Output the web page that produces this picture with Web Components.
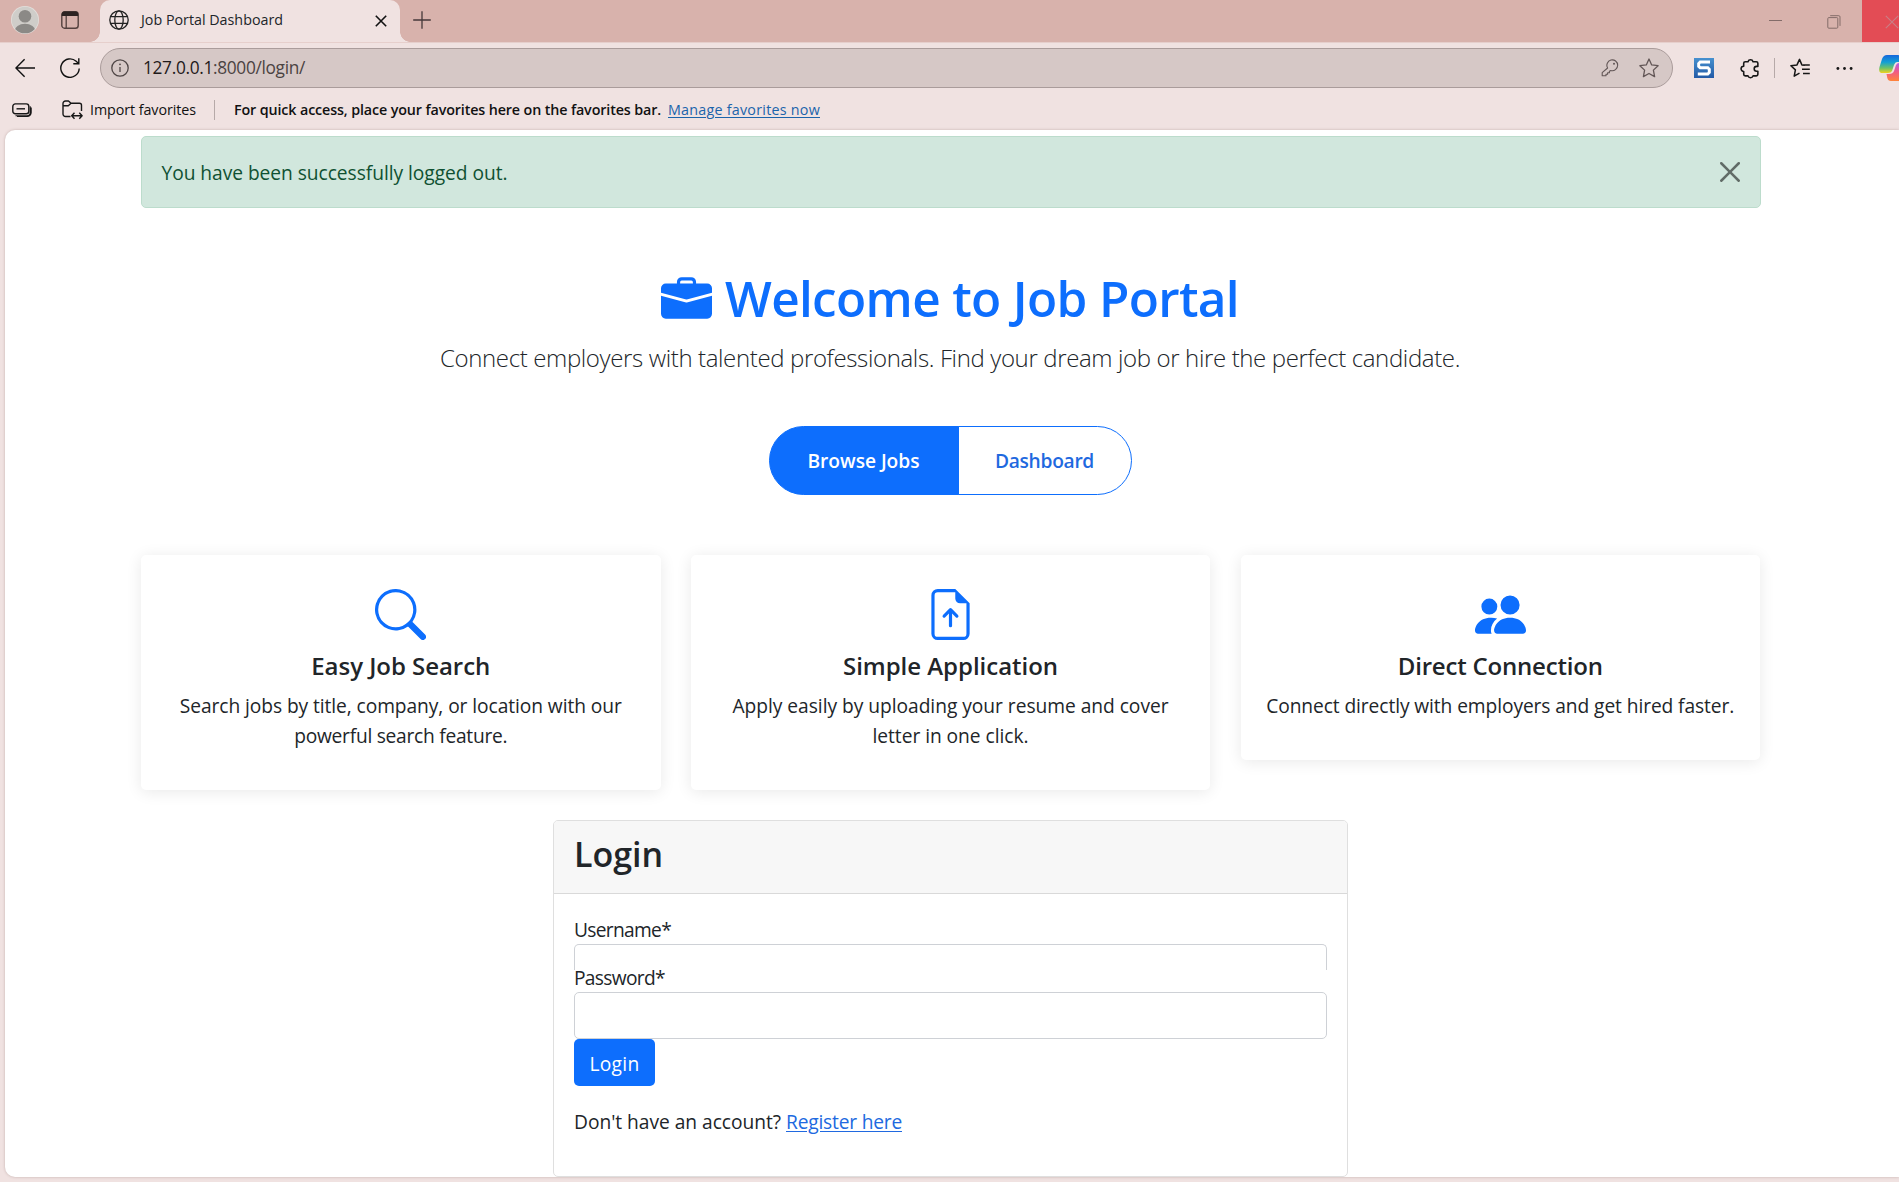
<!DOCTYPE html>
<html lang="en">
<head>
<meta charset="utf-8">
<title>Job Portal Dashboard</title>
<style>
html,body{margin:0;height:100%;overflow:hidden}
body{font-family:"Open Sans","Noto Sans",sans-serif;color:#212529;background:#f0e2e1}
</style>
</head>
<body>
<browser-window>
  <job-portal></job-portal>
</browser-window>
<script>
const ICONS = {
  avatar: ['0 0 28 28', '<clipPath id="c"><circle cx="14" cy="14" r="13.3"/></clipPath><circle cx="14" cy="14" r="14" fill="#e3dfdc"/><circle cx="14" cy="14" r="13.2" fill="#cfcdc9"/><g clip-path="url(#c)" fill="#8b8986"><circle cx="14" cy="10.2" r="6.3"/><ellipse cx="14" cy="25" rx="10.5" ry="7.2"/></g>'],
  workspace: ['0 0 18 18', '<rect x=".8" y=".8" width="16.4" height="16.4" rx="2.8" fill="none" stroke="#54403e" stroke-width="1.4"/><path d="M.8 5V3.2A2.6 2.6 0 0 1 3.4.6h11.2a2.6 2.6 0 0 1 2.6 2.6V5z" fill="#2d2322"/><path d="M5.2 5v12" stroke="#54403e" stroke-width="1.3"/>'],
  globe: ['0 0 20 20', '<g fill="none" stroke="#222" stroke-width="1.3"><circle cx="10" cy="10" r="9.2"/><ellipse cx="10" cy="10" rx="4.2" ry="9.2"/><path d="M1.5 6.7h17M1.5 13.3h17"/></g>'],
  close: ['0 0 12 12', '<path d="M.8.8l10.4 10.4M11.2.8L.8 11.2" stroke="currentColor" stroke-width="1.6" fill="none"/>'],
  thinclose: ['0 0 14 14', '<path d="M.8.8l12.4 12.4M13.2.8L.8 13.2" stroke="currentColor" stroke-width="1.1" fill="none"/>'],
  plus: ['0 0 18 18', '<path d="M9 .2v17.6M.2 9h17.6" stroke="#46393a" stroke-width="1.3"/>'],
  min: ['0 0 13 13', '<path d="M0 6.5h13" stroke="#836c69" stroke-width="1"/>'],
  restore: ['0 0 14 14', '<g fill="none" stroke="#836c69"><rect x=".8" y="2.6" width="10" height="10.6" rx="1"/><path d="M3.2.7h8.6a1.2 1.2 0 0 1 1.2 1.2v9"/></g>'],
  back: ['0 0 20 20', '<path d="M20 10H1M9.6 1.2L.9 10l8.700 8.800" stroke="#111" stroke-width="1.4" fill="none"/>'],
  reload: ['0 0 20 20', '<path d="M19.200 10.500A9.200 9.200 0 1 1 16.200 3.300L18.500 5.400M18.800 .3V5.700H13.300" stroke="#111" stroke-width="1.4" fill="none"/>'],
  info: ['0 0 18 18', '<circle cx="9" cy="9" r="8.2" fill="none" stroke="#4f4646" stroke-width="1.3"/><path d="M9 8v5" stroke="#4f4646" stroke-width="1.3"/><circle cx="9" cy="5.300" r=".9" fill="#4f4646"/>'],
  key: ['0 0 18 18', '<path d="M6.400 9.200A5.400 5.400 0 1 1 9.600 11.700L8.200 12.400V14H6.400V15.400H4.800V17H1V13.800z" transform="translate(.2 -.2)" fill="none" stroke="#625656" stroke-width="1.1" stroke-linejoin="round"/><circle cx="13" cy="4.700" r="1" fill="#625656"/>'],
  star: ['0 0 20 20', '<path d="M10 1l2.700 5.900 6.400.8-4.700 4.400 1.200 6.500L10 15.500l-5.600 3.100 1.200-6.500L.9 7.700l6.400-.8z" fill="none" stroke="#625656" stroke-width="1.3" stroke-linejoin="round"/>'],
  snag: ['0 0 20 20', '<defs><linearGradient id="g" x2="0" y2="1"><stop stop-color="#4791cf"/><stop offset="1" stop-color="#2259a6"/></linearGradient></defs><rect width="20" height="20" fill="url(#g)"/><path d="M16 4H6.200L4.700 5.500V8.300L6.200 9.800H13.800L15.300 11.300V14.500L13.800 16H3.800" fill="none" stroke="#fff" stroke-width="3"/>'],
  puzzle: ['0 0 19 20', '<path d="M5 3.500H7.600A2.500 2.500 0 0 1 12.400 3.500H15.500A1.500 1.500 0 0 1 17 5V8H15.800A2.300 2.300 0 0 0 15.800 12.600H17V15.500A1.500 1.500 0 0 1 15.500 17H12.400A2.500 2.500 0 0 1 7.600 17H5A1.500 1.500 0 0 1 3.500 15.500V12.800A2.500 2.500 0 0 1 3.500 7.800V5A1.500 1.500 0 0 1 5 3.500z" fill="none" stroke="#171717" stroke-width="1.5" stroke-linejoin="round"/>'],
  favs: ['0 0 20 20', '<path d="M14.800 7.200L11.900 6.900 9.500 1.400 7 6.900 .9 7.700l4.500 4.200-1.200 6.300 5.300-3M13 7h6.800M12 11.300h7.800M13 15.500h6.800" fill="none" stroke="#171717" stroke-width="1.500" stroke-linejoin="round"/>'],
  dots: ['0 0 18 18', '<g fill="#171717"><circle cx="2" cy="9" r="1.500"/><circle cx="9" cy="9" r="1.500"/><circle cx="16" cy="9" r="1.500"/></g>'],
  copilot: ['0 0 30 28', '<defs><linearGradient id="a" x2="0" y2="1"><stop stop-color="#1666dc"/><stop offset=".4" stop-color="#13a0d5"/><stop offset=".72" stop-color="#6cc26a"/><stop offset="1" stop-color="#efd21d"/></linearGradient><linearGradient id="b" x2="0" y2="1"><stop stop-color="#b45be8"/><stop offset=".5" stop-color="#f15b84"/><stop offset="1" stop-color="#ff8439"/></linearGradient></defs><path d="M8 1H19Q21.500 1 22.500 4L23.500 8H18Q16 8 15 11L13 17Q12 19 9 19H3.500Q-1 19 .5 13L3 5Q4.500 1 8 1z" fill="url(#a)"/><path d="M22 9H27Q31 9 29.500 15L27 23Q25.500 27 22 27H12Q9 27 8.300 24L7.500 20H10Q14 20 15 17L17 11Q18 9 20 9z" fill="url(#b)"/>'],
  tabs: ['0 0 20 15', '<g fill="none" stroke="#171717" stroke-width="1.400"><rect x=".8" y=".9" width="16" height="9.800" rx="2.500"/><path d="M4.500 5.800h8.500"/><path d="M18.200 3.200v6.300a3.200 3.200 0 0 1-3.200 3.200H3.500M19.200 4.500v5a4 4 0 0 1-4 4H5" stroke-width="1.100"/></g>'],
  folder: ['0 0 21 20', '<path d="M8.500 16.500H3.500A2.500 2.500 0 0 1 1 14V3.500A2.500 2.500 0 0 1 3.500 1H6.500L9 3.300H17.500A2 2 0 0 1 19.500 5.300V11M1 5.700H6.300L9 3.300M9.500 15.700H20M12.500 12.700L9.700 15.700l2.800 3M17.300 12.700l2.800 3-2.800 3" fill="none" stroke="#171717" stroke-width="1.400" stroke-linejoin="round"/>'],
  briefcase: ['0 0 16 16', '<path fill="currentColor" d="M6.5 1A1.5 1.5 0 0 0 5 2.5V3H1.500A1.500 1.500 0 0 0 0 4.500v1.384l7.614 2.030a1.500 1.500 0 0 0 .772 0L16 5.884V4.500A1.500 1.500 0 0 0 14.500 3H11v-.5A1.500 1.500 0 0 0 9.500 1h-3zm0 1h3a.5.5 0 0 1 .5.5V3H6v-.5a.5.5 0 0 1 .5-.5z"/><path fill="currentColor" d="M0 12.500A1.500 1.500 0 0 0 1.500 14h13a1.500 1.500 0 0 0 1.500-1.500V6.850L8.129 8.947a.5.5 0 0 1-.258 0L0 6.850v5.650z"/>'],
  search: ['0 0 16 16', '<path fill="currentColor" d="M11.742 10.344a6.500 6.500 0 1 0-1.397 1.398h-.001c.03.04.062.078.098.115l3.850 3.850a1 1 0 0 0 1.415-1.414l-3.850-3.850a1.007 1.007 0 0 0-.115-.1zM12 6.500a5.500 5.500 0 1 1-11 0 5.500 5.500 0 0 1 11 0z"/>'],
  upload: ['0 0 16 16', '<path fill="currentColor" d="M8.500 11.500a.5.5 0 0 1-1 0V7.707L6.354 8.854a.5.5 0 1 1-.708-.708l2-2a.5.5 0 0 1 .708 0l2 2a.5.5 0 0 1-.708.708L8.500 7.707V11.500z"/><path fill="currentColor" d="M14 14V4.500L9.500 0H4a2 2 0 0 0-2 2v12a2 2 0 0 0 2 2h8a2 2 0 0 0 2-2zM9.500 3A1.500 1.500 0 0 0 11 4.500h2V14a1 1 0 0 1-1 1H4a1 1 0 0 1-1-1V2a1 1 0 0 1 1-1h5.500v2z"/>'],
  people: ['0 0 16 16', '<path fill="currentColor" d="M7 14s-1 0-1-1 1-4 5-4 5 3 5 4-1 1-1 1H7zm4-6a3 3 0 1 0 0-6 3 3 0 0 0 0 6zM5.216 14A2.238 2.238 0 0 1 5 13c0-1.355.68-2.750 1.936-3.720A6.325 6.325 0 0 0 5 9c-4 0-5 3-5 4s1 1 1 1h4.216zM4.500 8a2.500 2.500 0 1 0 0-5 2.500 2.500 0 0 0 0 5z"/>'],
  dismiss: ['0 0 16 16', '<path fill="currentColor" d="M.293.293a1 1 0 0 1 1.414 0L8 6.586 14.293.293a1 1 0 1 1 1.414 1.414L9.414 8l6.293 6.293a1 1 0 0 1-1.414 1.414L8 9.414l-6.293 6.293a1 1 0 0 1-1.414-1.414L6.586 8 .293 1.707a1 1 0 0 1 0-1.414z"/>']
};

/* <ui-icon name w h>: one inline SVG from the table above */
class UiIcon extends HTMLElement {
  connectedCallback() {
    if (this.shadowRoot) return;
    const [box, body] = ICONS[this.getAttribute('name')];
    const w = this.getAttribute('w'), h = this.getAttribute('h') || w;
    this.attachShadow({mode: 'open'}).innerHTML =
      `<style>:host{display:block;flex:none;width:${w}px;height:${h}px}svg{display:block}</style>
       <svg width="${w}" height="${h}" viewBox="${box}">${body}</svg>`;
  }
}
customElements.define('ui-icon', UiIcon);

/* <ui-text w size lh weight>: one line of text, tracked so that it fills its width */
class UiText extends HTMLElement {
  connectedCallback() {
    if (this.shadowRoot) return;
    const a = (n, d) => this.getAttribute(n) || d;
    this.attachShadow({mode: 'open'}).innerHTML =
      `<style>:host{display:block;flex:none;white-space:nowrap;width:${a('w')}px;font-size:${a('size', '19.2')}px;
        line-height:${a('lh', '30')}px;font-weight:${a('weight', '400')}}</style><span><slot></slot></span>`;
    const span = this.shadowRoot.querySelector('span');
    // Tracking turns ligatures off, so a second and third pass settle the width.
    let gap = 0.01;
    for (let i = 0; i < 3; i++) {
      this.style.letterSpacing = gap.toFixed(4) + 'px';
      const shown = this.assignedText();
      gap += (a('w') - span.getBoundingClientRect().width) / shown.length;
    }
    this.style.letterSpacing = gap.toFixed(4) + 'px';
  }
  assignedText() {
    const inner = this.querySelector('slot');
    return inner ? inner.assignedNodes().map(n => n.textContent).join('') || ' ' : this.textContent;
  }
}
customElements.define('ui-text', UiText);

function define(tag, css, html) {
  customElements.define(tag, class extends HTMLElement {
    connectedCallback() {
      if (this.shadowRoot) return;
      this.attachShadow({mode: 'open'}).innerHTML =
        `<style>*{box-sizing:border-box}${css}</style>` + (typeof html === 'function' ? html(this) : html);
    }
  });
}

define('tab-strip', `
  :host{display:flex;height:42px;background:#d8b2ac;align-items:flex-start;overflow:hidden}
  .lead{display:flex;width:100px;height:42px;padding:6px 0 0 11px;gap:22px}
  .lead ui-icon+ui-icon{margin-top:5px}
  .tab{display:flex;align-items:center;width:300px;height:42px;background:#f0e2e1;border-radius:10px 10px 0 0;padding:0 13px 2px 9px}
  .tab ui-text{margin-left:12px}.tab .x{margin-left:auto;color:#111;margin-top:2px}
  .foot{width:10px;height:42px;flex:none}
  .l{margin-left:-10px;background:radial-gradient(circle at 0 0,transparent 9.500px,#f0e2e1 10px) no-repeat 0 32px/10px 10px}
  .r{background:radial-gradient(circle at 100% 0,transparent 9.500px,#f0e2e1 10px) no-repeat 0 32px/10px 10px}
  .plus{margin:10.500px 0 0 3px}
  .win{display:flex;margin-left:auto}
  .win>*{height:42px}
  .mn{padding:14px 45px 0 0}.rs{padding:15px 21px 0 0}
  .cl{width:37px;background:#e34c55;padding:15px 0 0 23px;color:#ca7f86}
`, `<div class="lead"><ui-icon name="avatar" w="28"></ui-icon><ui-icon name="workspace" w="18"></ui-icon></div>
  <div class="foot l"></div>
  <div class="tab"><ui-icon name="globe" w="20"></ui-icon><ui-text w="142" size="14.3" lh="20">Job Portal Dashboard</ui-text><ui-icon class="x" name="close" w="12"></ui-icon></div>
  <div class="foot r"></div>
  <ui-icon class="plus" name="plus" w="18"></ui-icon>
  <div class="win"><div class="mn"><ui-icon name="min" w="13"></ui-icon></div><div class="rs"><ui-icon name="restore" w="14"></ui-icon></div><div class="cl"><ui-icon name="thinclose" w="14"></ui-icon></div></div>`);

define('nav-bar', `
  :host{display:flex;box-sizing:border-box;height:52px;align-items:center;padding:0 0 1px 15px;background:#f0e2e1;border-top:1px solid #e6cfcc;overflow:hidden}
  .reload{margin-left:25px}
  .addr{display:flex;flex:none;align-items:center;margin-left:20px;width:1573px;height:40px;border:1px solid #aa9c9b;border-radius:20px;background:#d6c8c6;padding:0 13px 0 10px}
  .addr ui-text{margin-left:14px;color:#4b4342}
  .key{margin-left:auto}.star{margin-left:20px}
  .snag{margin-left:21px}.puz{margin-left:26px}
  .bar{width:1px;height:20px;background:#b6a9a8;margin:0 15px 0 14px;flex:none}
  .dots{margin-left:26px}.cop{margin-left:26px}
`, `<ui-icon name="back" w="20"></ui-icon><ui-icon class="reload" name="reload" w="20"></ui-icon>
  <div class="addr"><ui-icon name="info" w="18"></ui-icon><ui-text w="162" size="17.3" lh="24"><span style="color:#1f1a1a">127.0.0.1</span>:8000/login/</ui-text>
  <ui-icon class="key" name="key" w="18"></ui-icon><ui-icon class="star" name="star" w="20"></ui-icon></div>
  <ui-icon class="snag" name="snag" w="20"></ui-icon><ui-icon class="puz" name="puzzle" w="20" h="21"></ui-icon><div class="bar"></div>
  <ui-icon name="favs" w="20"></ui-icon><ui-icon class="dots" name="dots" w="17"></ui-icon><ui-icon class="cop" name="copilot" w="30" h="28"></ui-icon>`);

define('favorites-bar', `
  :host{display:flex;box-sizing:border-box;height:36px;align-items:center;padding:0 0 4px 12px;background:#f0e2e1;color:#111}
  .f{margin:0 7px 0 30px}
  .bar{width:1px;height:20px;background:#b6a9a8;margin:0 19px 0 18px}
  .lk{color:#1b64ab;margin-left:7px;text-decoration:underline;text-underline-offset:2px}
`, `<ui-icon name="tabs" w="20" h="15"></ui-icon><ui-icon class="f" name="folder" w="21" h="20"></ui-icon>
  <ui-text w="106" size="14.3" lh="20">Import favorites</ui-text><div class="bar"></div>
  <ui-text w="427" size="14.3" lh="20" weight="600">For quick access, place your favorites here on the favorites bar.</ui-text>
  <ui-text class="lk" w="152" size="14.3" lh="20" weight="500">Manage favorites now</ui-text>`);

define('browser-window', `
  :host{display:flex;flex-direction:column;width:1899px;height:1182px;background:#f0e2e1;overflow:hidden}
  .view{height:1047px;margin-left:5px;background:#fff;border-radius:10px 0 0 10px;overflow:hidden;box-shadow:0 0 3px #c4b0ae}
`, `<tab-strip></tab-strip><nav-bar></nav-bar><favorites-bar></favorites-bar><div class="view"><slot></slot></div>`);

define('alert-message', `
  :host{display:flex;box-sizing:border-box;justify-content:space-between;align-items:center;height:72px;border:1px solid #bcdccc;border-radius:5px;background:#d1e7dd;color:#0f5132;padding:0 20px 0 19.500px}
  ui-icon{color:#000;opacity:.53}ui-text{margin-top:1px}
`, el => `<ui-text w="346">${el.getAttribute('message')}</ui-text><ui-icon name="dismiss" w="20"></ui-icon>`);

define('hero-banner', `
  :host{display:flex;flex-direction:column;align-items:center;padding-right:2px}
  .t{display:flex;color:#0d6efd;height:60px;gap:13px;margin-top:62px}
  .t ui-icon{margin-top:4px}
  .sub{margin-top:9px}
  .btns{display:flex;height:69px;margin-top:49px}
  .btns div{display:flex;align-items:center;justify-content:center;border:1px solid #0d6efd;padding-top:1px}
  .a{width:190px;background:#0d6efd;color:#fff;border-radius:35px 0 0 35px}
  .b{width:174px;margin-left:-1px;color:#1f69df;border-radius:0 35px 35px 0}
`, `<div class="t"><ui-icon name="briefcase" w="51"></ui-icon><ui-text w="514" size="49.5" lh="57" weight="600">Welcome to Job Portal</ui-text></div>
  <ui-text class="sub" w="1020" size="24" lh="38" weight="300">Connect employers with talented professionals. Find your dream job or hire the perfect candidate.</ui-text>
  <div class="btns"><div class="a"><ui-text w="112" weight="600">Browse Jobs</ui-text></div><div class="b"><ui-text w="99" weight="600">Dashboard</ui-text></div></div>`);

define('feature-card', `
  :host{display:flex;box-sizing:border-box;flex-direction:column;align-items:center;width:519.500px;padding:34px 0 39px;background:#fff;border-radius:5px;box-shadow:0 2px 16px rgba(0,0,0,.09)}
  ui-icon{color:#0d6efd}
  .h{margin:11px 0 10px}
`, el => `<ui-icon name="${el.getAttribute('icon')}" w="51"></ui-icon><div class="h"><slot name="title"></slot></div><slot></slot>`);

define('login-card', `
  :host{display:block;box-sizing:border-box;width:795px;height:357px;border:1px solid #dfdfdf;border-radius:5px}
  header{height:73px;background:#f7f7f7;border-bottom:1px solid #d9d9d9;padding:10px 20px;border-radius:4px 4px 0 0}
  main{display:flex;flex-direction:column;padding:22px 20px 0}
  .in{border:1px solid #ced1d6;border-radius:5px;height:47px}
  .cut{height:26px;border-bottom:0;border-radius:5px 5px 0 0}
  .pw{height:22px}
  .btn{display:flex;justify-content:center;align-items:center;width:81px;height:47px;border-radius:5px;background:#0d6efd;color:#fff;padding-top:2px}
  .reg{display:flex;gap:5px;margin-top:21px}
  .lk{color:#2069e0;text-decoration:underline;text-underline-offset:2px}
`, `<header><ui-text w="89" size="34" lh="46" weight="600">Login</ui-text></header>
  <main><ui-text w="97" lh="28">Username*</ui-text><div class="in cut"></div>
  <div class="pw"><ui-text w="91" lh="15">Password*</ui-text></div><div class="in"></div>
  <div class="btn"><ui-text w="50">Login</ui-text></div>
  <div class="reg"><ui-text w="207">Don't have an account?</ui-text><ui-text class="lk" w="116">Register here</ui-text></div></main>`);

define('job-portal', `
  :host{display:block;box-sizing:border-box;padding:6px 138px 0 136px;height:1047px}
  .row{display:flex;justify-content:space-between;align-items:flex-start;margin-top:60px;padding-right:1px}
  .login{display:flex;justify-content:center;margin-top:30px;padding-right:1px}
`, `<alert-message message="You have been successfully logged out."></alert-message>
  <hero-banner></hero-banner>
  <div class="row">
    <feature-card icon="search"><ui-text slot="title" w="179" size="24" weight="600">Easy Job Search</ui-text><ui-text w="442">Search jobs by title, company, or location with our</ui-text><ui-text w="213">powerful search feature.</ui-text></feature-card>
    <feature-card icon="upload"><ui-text slot="title" w="215" size="24" weight="600">Simple Application</ui-text><ui-text w="436">Apply easily by uploading your resume and cover</ui-text><ui-text w="156">letter in one click.</ui-text></feature-card>
    <feature-card icon="people"><ui-text slot="title" w="205" size="24" weight="600">Direct Connection</ui-text><ui-text w="468">Connect directly with employers and get hired faster.</ui-text></feature-card>
  </div>
  <div class="login"><login-card></login-card></div>`);
</script>
</body>
</html>
